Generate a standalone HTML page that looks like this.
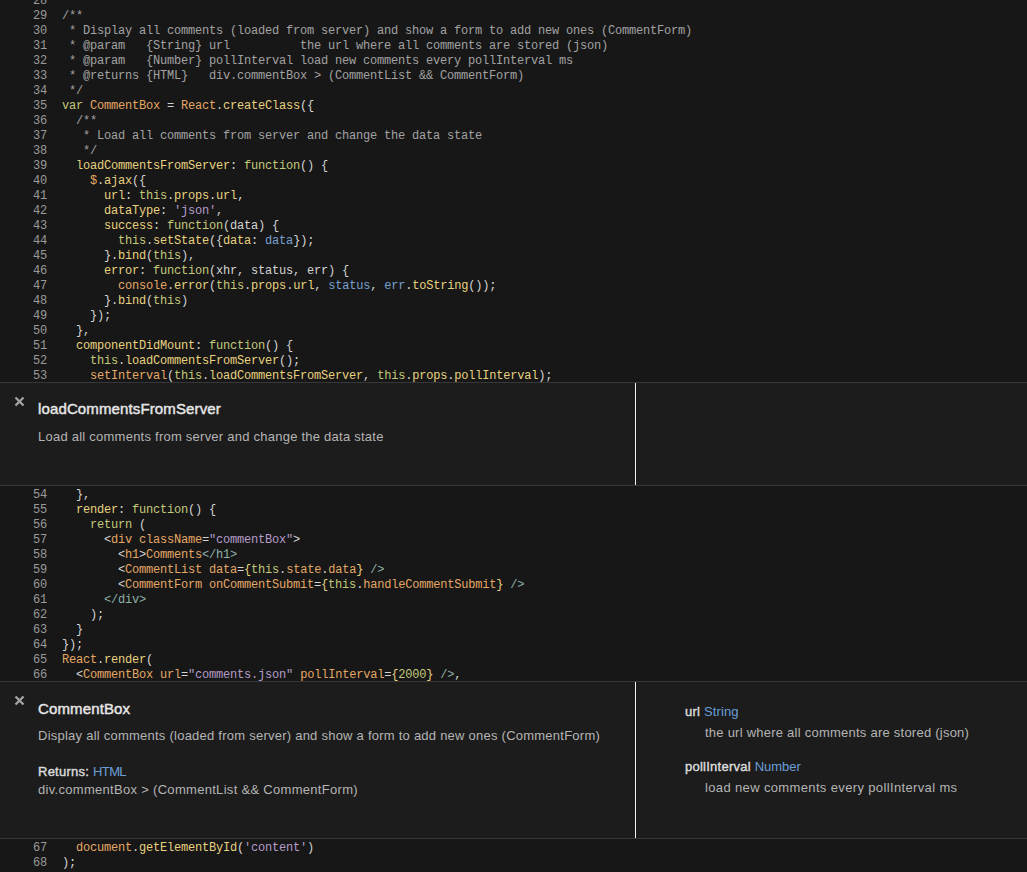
<!DOCTYPE html>
<html><head><meta charset="utf-8"><style>
html,body{margin:0;padding:0;}
body{width:1027px;height:872px;overflow:hidden;position:relative;background:#171717;font-family:"Liberation Mono",monospace;}
.ln,.cl{position:absolute;height:15px;line-height:15px;font-size:12px;letter-spacing:-0.2px;white-space:pre;}
.ln{left:0;width:47px;text-align:right;color:#9a9a9a;}
.cl{left:62px;color:#d4d4d4;}
.c{color:#a2a2a2}
.k{color:#c3c87a}
.o{color:#e4a765}
.p{color:#e7d27f}
.s{color:#b59cc9}
.v{color:#77a0cf}
.t{color:#8fb0a8}
.n{color:#c3c87a}
.panel{position:absolute;left:0;width:1027px;background:#1c1c1c;border-top:1px solid #373737;border-bottom:1px solid #373737;}
.vl{position:absolute;left:635px;top:0;bottom:0;width:1px;background:#f0f0f0;}
.x{position:absolute;left:14px;width:12px;height:12px;}
.tx{position:absolute;left:38px;font-family:"Liberation Sans",sans-serif;font-size:14px;line-height:20px;white-space:nowrap;}
.ttl{font-weight:400;font-size:15px;color:#e6e6e6;letter-spacing:0.13px;-webkit-text-stroke:0.45px #e6e6e6;}
.dsc{color:#b4b4b4;letter-spacing:0.24px;font-size:13px;}
.dsc b{font-weight:400;color:#dcdcdc;letter-spacing:0.25px;-webkit-text-stroke:0.4px #dcdcdc;}
.ty{color:#6a9fd8}

</style></head><body>
<div class="ln" style="top:-6px">28</div><div class="cl" style="top:-6px"></div><div class="ln" style="top:9px">29</div><div class="cl" style="top:9px"><span class="c">/**</span></div><div class="ln" style="top:24px">30</div><div class="cl" style="top:24px"><span class="c"> * Display all comments (loaded from server) and show a form to add new ones (CommentForm)</span></div><div class="ln" style="top:39px">31</div><div class="cl" style="top:39px"><span class="c"> * @param   {String} url          the url where all comments are stored (json)</span></div><div class="ln" style="top:54px">32</div><div class="cl" style="top:54px"><span class="c"> * @param   {Number} pollInterval load new comments every pollInterval ms</span></div><div class="ln" style="top:69px">33</div><div class="cl" style="top:69px"><span class="c"> * @returns {HTML}   div.commentBox &gt; (CommentList &amp;&amp; CommentForm)</span></div><div class="ln" style="top:84px">34</div><div class="cl" style="top:84px"><span class="c"> */</span></div><div class="ln" style="top:99px">35</div><div class="cl" style="top:99px"><span class="k">var</span> <span class="o">CommentBox</span> = <span class="o">React</span>.<span class="p">createClass</span>({</div><div class="ln" style="top:114px">36</div><div class="cl" style="top:114px">  <span class="c">/**</span></div><div class="ln" style="top:129px">37</div><div class="cl" style="top:129px">  <span class="c"> * Load all comments from server and change the data state</span></div><div class="ln" style="top:144px">38</div><div class="cl" style="top:144px">  <span class="c"> */</span></div><div class="ln" style="top:159px">39</div><div class="cl" style="top:159px">  <span class="p">loadCommentsFromServer</span>: <span class="k">function</span>() {</div><div class="ln" style="top:174px">40</div><div class="cl" style="top:174px">    <span class="o">$</span>.<span class="p">ajax</span>({</div><div class="ln" style="top:189px">41</div><div class="cl" style="top:189px">      <span class="p">url</span>: <span class="k">this</span>.<span class="p">props</span>.<span class="p">url</span>,</div><div class="ln" style="top:204px">42</div><div class="cl" style="top:204px">      <span class="p">dataType</span>: <span class="s">&#x27;json&#x27;</span>,</div><div class="ln" style="top:219px">43</div><div class="cl" style="top:219px">      <span class="p">success</span>: <span class="k">function</span>(data) {</div><div class="ln" style="top:234px">44</div><div class="cl" style="top:234px">        <span class="k">this</span>.<span class="p">setState</span>({<span class="p">data</span>: <span class="v">data</span>});</div><div class="ln" style="top:249px">45</div><div class="cl" style="top:249px">      }.<span class="p">bind</span>(<span class="k">this</span>),</div><div class="ln" style="top:264px">46</div><div class="cl" style="top:264px">      <span class="p">error</span>: <span class="k">function</span>(xhr, status, err) {</div><div class="ln" style="top:279px">47</div><div class="cl" style="top:279px">        <span class="o">console</span>.<span class="p">error</span>(<span class="k">this</span>.<span class="p">props</span>.<span class="p">url</span>, <span class="v">status</span>, <span class="v">err</span>.<span class="p">toString</span>());</div><div class="ln" style="top:294px">48</div><div class="cl" style="top:294px">      }.<span class="p">bind</span>(<span class="k">this</span>)</div><div class="ln" style="top:309px">49</div><div class="cl" style="top:309px">    });</div><div class="ln" style="top:324px">50</div><div class="cl" style="top:324px">  },</div><div class="ln" style="top:339px">51</div><div class="cl" style="top:339px">  <span class="p">componentDidMount</span>: <span class="k">function</span>() {</div><div class="ln" style="top:354px">52</div><div class="cl" style="top:354px">    <span class="k">this</span>.<span class="p">loadCommentsFromServer</span>();</div><div class="ln" style="top:369px">53</div><div class="cl" style="top:369px">    <span class="o">setInterval</span>(<span class="k">this</span>.<span class="p">loadCommentsFromServer</span>, <span class="k">this</span>.<span class="p">props</span>.<span class="p">pollInterval</span>);</div><div class="ln" style="top:488px">54</div><div class="cl" style="top:488px">  },</div><div class="ln" style="top:503px">55</div><div class="cl" style="top:503px">  <span class="p">render</span>: <span class="k">function</span>() {</div><div class="ln" style="top:518px">56</div><div class="cl" style="top:518px">    <span class="k">return</span> (</div><div class="ln" style="top:533px">57</div><div class="cl" style="top:533px">      &lt;<span class="o">div</span> <span class="o">className</span>=<span class="s">&quot;commentBox&quot;</span>&gt;</div><div class="ln" style="top:548px">58</div><div class="cl" style="top:548px">        &lt;<span class="o">h1</span>&gt;<span class="o">Comments</span><span class="t">&lt;/h1&gt;</span></div><div class="ln" style="top:563px">59</div><div class="cl" style="top:563px">        &lt;<span class="o">CommentList</span> <span class="o">data</span>=<span class="p">{</span><span class="k">this</span>.<span class="o">state</span>.<span class="o">data</span><span class="p">}</span> <span class="t">/&gt;</span></div><div class="ln" style="top:578px">60</div><div class="cl" style="top:578px">        &lt;<span class="o">CommentForm</span> <span class="o">onCommentSubmit</span>=<span class="p">{</span><span class="k">this</span>.<span class="o">handleCommentSubmit</span><span class="p">}</span> <span class="t">/&gt;</span></div><div class="ln" style="top:593px">61</div><div class="cl" style="top:593px">      <span class="t">&lt;/div&gt;</span></div><div class="ln" style="top:608px">62</div><div class="cl" style="top:608px">    );</div><div class="ln" style="top:623px">63</div><div class="cl" style="top:623px">  }</div><div class="ln" style="top:638px">64</div><div class="cl" style="top:638px">});</div><div class="ln" style="top:653px">65</div><div class="cl" style="top:653px"><span class="o">React</span>.<span class="p">render</span>(</div><div class="ln" style="top:668px">66</div><div class="cl" style="top:668px">  &lt;<span class="o">CommentBox</span> <span class="o">url</span>=<span class="s">&quot;comments.json&quot;</span> <span class="o">pollInterval</span>=<span class="p">{</span><span class="n">2000</span><span class="p">}</span> <span class="t">/&gt;</span>,</div><div class="ln" style="top:841px">67</div><div class="cl" style="top:841px">  <span class="o">document</span>.<span class="p">getElementById</span>(<span class="s">&#x27;content&#x27;</span>)</div><div class="ln" style="top:856px">68</div><div class="cl" style="top:856px">);</div>
<div class="panel" style="top:382px;height:102px;"><div class="vl"></div></div>
<svg class="x" style="top:396px" viewBox="0 0 12 12"><path d="M1.5 1.5L9.5 9.5M9.5 1.5L1.5 9.5" stroke="#a4a4a4" stroke-width="2.3"/></svg>
<div class="tx ttl" style="top:399px">loadCommentsFromServer</div>
<div class="tx dsc" style="top:427px">Load all comments from server and change the data state</div>
<div class="panel" style="top:681px;height:156px;"><div class="vl"></div></div>
<svg class="x" style="top:695px" viewBox="0 0 12 12"><path d="M1.5 1.5L9.5 9.5M9.5 1.5L1.5 9.5" stroke="#a4a4a4" stroke-width="2.3"/></svg>
<div class="tx ttl" style="top:699px">CommentBox</div>
<div class="tx dsc" style="top:726px">Display all comments (loaded from server) and show a form to add new ones (CommentForm)</div>
<div class="tx dsc" style="top:762px"><b>Returns:</b> <span class="ty" style="letter-spacing:-0.6px">HTML</span></div>
<div class="tx dsc" style="top:780px;letter-spacing:0.3px">div.commentBox &gt; (CommentList &amp;&amp; CommentForm)</div>
<div class="tx dsc" style="left:685px;top:702px"><b>url</b> <span class="ty" style="letter-spacing:0.1px">String</span></div>
<div class="tx dsc" style="left:705px;top:723px">the url where all comments are stored (json)</div>
<div class="tx dsc" style="left:685px;top:757px"><b>pollInterval</b> <span class="ty" style="letter-spacing:-0.05px">Number</span></div>
<div class="tx dsc" style="left:705px;top:778px;letter-spacing:0.36px">load new comments every pollInterval ms</div>

</body></html>
